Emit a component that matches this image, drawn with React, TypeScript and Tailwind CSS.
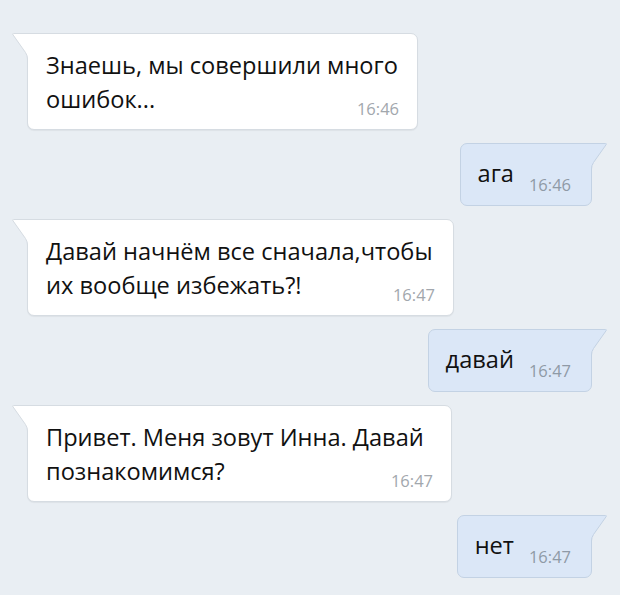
import React from "react";

const FONT = { fontFamily: '"Open Sans", "Noto Sans", "Liberation Sans", sans-serif' };

function InTail() {
  return (
    <svg className="absolute left-[-16px] top-[-1px]" width="17" height="26" viewBox="0 0 17 26">
      <path d="M0.5 0.5 L17 0.5 L17 26 L15.5 26 L15.5 24 Q15 22 13.5 19.5 L1 1.5 Z" fill="#ffffff" />
      <path d="M17 0.5 L1.5 0.5 Q0 0.5 1 1.8 L13.5 19.5 Q15.5 22.5 15.5 26" fill="none" stroke="#d6dce2" strokeWidth="1" />
    </svg>
  );
}

function OutTail() {
  return (
    <svg className="absolute right-[-16px] top-[-1px]" width="17" height="26" viewBox="0 0 17 26">
      <path d="M16.5 0.5 L0 0.5 L0 26 L1.5 26 L1.5 24 Q2 22 3.5 19.5 L16 1.5 Z" fill="#dbe7f7" />
      <path d="M0 0.5 L15.5 0.5 Q17 0.5 16 1.8 L3.5 19.5 Q1.5 22.5 1.5 26" fill="none" stroke="#c3d2e4" strokeWidth="1" />
    </svg>
  );
}

function Incoming({ lines, time, width }: { lines: string[]; time: string; width: number }) {
  return (
    <div
      className="relative ml-[27px] rounded-[7px] rounded-tl-none border border-[#d6dce2] bg-white pl-[18px] pr-[18px] pt-[14px] pb-[10px] shadow-[0_1px_1px_rgba(0,0,0,0.05)]"
      style={{ width }}
    >
      <InTail />
      <p className="text-[23.6px] leading-[34px] text-[#111111] whitespace-nowrap">
        {lines.map((l, i) => (
          <React.Fragment key={i}>
            {l}
            {i < lines.length - 1 && <br />}
          </React.Fragment>
        ))}
      </p>
      <div className="-mt-[17px] text-right text-[16.5px] leading-[20px] text-[#a2a7ad]">{time}</div>
    </div>
  );
}

function Outgoing({ text, time }: { text: string; time: string }) {
  return (
    <div className="relative mr-[28px] self-end flex items-start rounded-[7px] rounded-tr-none border border-[#c3d2e4] bg-[#dbe7f7] pl-[17px] pr-[20px] pt-[12px] pb-[10px]">
      <OutTail />
      <span className="text-[23.6px] leading-[34px] text-[#111111]">{text}</span>
      <span className="ml-[15px] mt-[19px] text-[16.5px] leading-[20px] text-[#8f9aa6]">{time}</span>
    </div>
  );
}

export default function App() {
  return (
    <div className="w-[620px] h-[595px] overflow-hidden bg-[#e9eef3]" style={FONT}>
      <div className="flex flex-col gap-[13px] pt-[33px]">
        <Incoming width={391} lines={["Знаешь, мы совершили много", "ошибок..."]} time="16:46" />
        <Outgoing text="ага" time="16:46" />
        <Incoming width={427} lines={["Давай начнём все сначала,чтобы", "их вообще избежать?!"]} time="16:47" />
        <Outgoing text="давай" time="16:47" />
        <Incoming width={425} lines={["Привет. Меня зовут Инна. Давай", "познакомимся?"]} time="16:47" />
        <Outgoing text="нет" time="16:47" />
      </div>
    </div>
  );
}
